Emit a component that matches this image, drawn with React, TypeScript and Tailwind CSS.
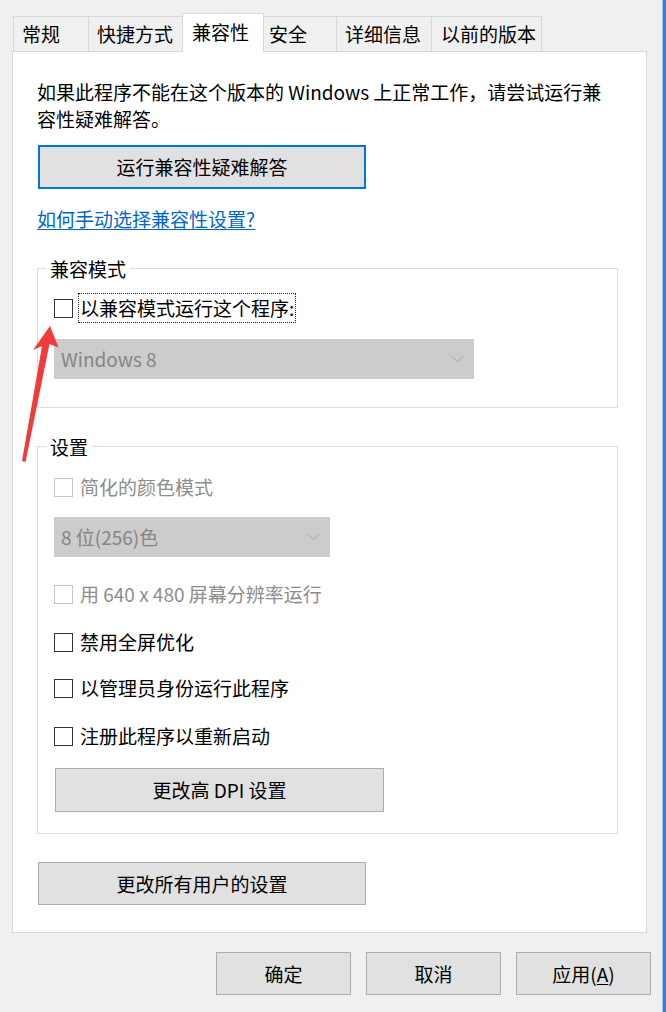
import type { ReactNode } from 'react';

const Check = ({ label, disabled, focused }: { label: string; disabled?: boolean; focused?: boolean }) => (
  <div className="flex h-[30px] items-center">
    <span
      className={`h-[19px] w-[19px] shrink-0 border bg-white ${disabled ? 'border-[#c6c6c6]' : 'border-[#333333]'}`}
    />
    <span
      className={`ml-[5px] flex h-[30px] items-center border border-dotted px-[1px] leading-[28px] ${
        focused ? 'border-[#222222]' : 'border-transparent'
      } ${disabled ? 'text-[#8d8d8d]' : 'text-black'}`}
    >
      {label}
    </span>
  </div>
);

const Select = ({ value, width }: { value: string; width: string }) => (
  <div className={`flex h-[40px] items-center justify-between border border-[#cccccc] bg-[#cccccc] pl-[6px] pr-[9px] ${width}`}>
    <span className="leading-[28px] text-[#858585]">{value}</span>
    <svg width="13" height="8" viewBox="0 0 13 8" fill="none">
      <polyline points="0.5,0.8 6.5,6.8 12.5,0.8" stroke="#a3a3a3" strokeWidth="1" />
    </svg>
  </div>
);

const Button = ({ children, className = '', primary }: { children: ReactNode; className?: string; primary?: boolean }) => (
  <div
    className={`flex items-center justify-center bg-[#e1e1e1] leading-[28px] ${
      primary ? 'border-2 border-[#0078d7]' : 'border border-[#adadad]'
    } ${className}`}
  >
    {children}
  </div>
);

const Group = ({ title, children, className = '' }: { title: string; children: ReactNode; className?: string }) => (
  <fieldset className={`border border-[#dcdcdc] px-[16px] ${className}`}>
    <legend className="ml-[-8px] px-[4px] leading-[27px]">{title}</legend>
    {children}
  </fieldset>
);

const tabs = [
  { name: '常规', w: 'w-[76px]', pl: 'pl-[8px]' },
  { name: '快捷方式', w: 'w-[95px]', pl: 'pl-[8px]' },
  { name: '兼容性', w: 'w-[82px]', pl: 'pl-[9px]', active: true },
  { name: '安全', w: 'w-[74px]', pl: 'pl-[5px]' },
  { name: '详细信息', w: 'w-[96px]', pl: 'pl-[8px]' },
  { name: '以前的版本', w: 'w-[111px]', pl: 'pl-[9px]' },
];

export default function App() {
  return (
    <div className="relative flex h-[1012px] w-[666px] overflow-hidden bg-[#f0f0f0] font-['Noto_Sans_CJK_SC',sans-serif] text-[19px] text-black">
      <div className="flex w-[662px] flex-col pl-[12px] pt-[13px]">
        {/* tab strip */}
        <div className="flex h-[38px] items-end pl-[1px]">
          {tabs.map((t, i) =>
            t.active ? (
              <div
                key={t.name}
                className={`relative z-10 -mb-[1px] -ml-[1px] flex h-[39px] items-center border border-b-0 border-[#d9d9d9] bg-white pb-[3px] leading-[28px] ${t.w} ${t.pl}`}
              >
                {t.name}
              </div>
            ) : (
              <div
                key={t.name}
                className={`flex h-[35px] items-center border border-b-0 border-[#d9d9d9] bg-[#f0f0f0] leading-[28px] ${
                  i > 0 ? '-ml-[1px]' : ''
                } ${t.w} ${t.pl}`}
              >
                {t.name}
              </div>
            )
          )}
        </div>

        {/* page */}
        <div className="flex w-[635px] flex-col border border-[#d9d9d9] bg-white pb-[27px] pl-[24px] pr-[28px] pt-[26px]">
          <p className="leading-[27px]">如果此程序不能在这个版本的 Windows 上正常工作，请尝试运行兼容性疑难解答。</p>

          <Button primary className="ml-[1px] mt-[13px] h-[44px] w-[328px]">
            运行兼容性疑难解答
          </Button>

          <div className="mt-[16px] leading-[27px]">
            <a className="text-[#0066cc] underline underline-offset-2">如何手动选择兼容性设置?</a>
          </div>

          <Group title="兼容模式" className="mt-[23px] pb-[28px]">
            <div className="mt-[11px]">
              <Check label="以兼容模式运行这个程序:" focused />
            </div>
            <div className="mt-[16px]">
              <Select value="Windows 8" width="w-[420px]" />
            </div>
          </Group>

          <Group title="设置" className="mt-[25px] pb-[21px]">
            <div className="mt-[12px]">
              <Check label="简化的颜色模式" disabled />
            </div>
            <div className="mt-[15px]">
              <Select value="8 位(256)色" width="w-[276px]" />
            </div>
            <div className="mt-[22px]">
              <Check label="用 640 x 480 屏幕分辨率运行" disabled />
            </div>
            <div className="mt-[18px]">
              <Check label="禁用全屏优化" />
            </div>
            <div className="mt-[16px]">
              <Check label="以管理员身份运行此程序" />
            </div>
            <div className="mt-[18px]">
              <Check label="注册此程序以重新启动" />
            </div>
            <Button className="ml-[1px] mt-[17px] h-[44px] w-[329px]">更改高 DPI 设置</Button>
          </Group>

          <Button className="ml-[1px] mt-[28px] h-[43px] w-[328px]">更改所有用户的设置</Button>
        </div>

        {/* dialog buttons */}
        <div className="mt-[19px] flex w-[639px] justify-end gap-[15px]">
          <Button className="h-[43px] w-[135px]">确定</Button>
          <Button className="h-[43px] w-[135px]">取消</Button>
          <Button className="h-[43px] w-[135px]">
            <span>
              应用(<span className="underline underline-offset-2">A</span>)
            </span>
          </Button>
        </div>
      </div>

      {/* window edge */}
      <div className="w-[4px] border-l border-[#9cc0ea] bg-[#3a80d2]" />

      {/* red annotation arrow */}
      <svg
        className="pointer-events-none absolute left-[15px] top-[320px]"
        width="50"
        height="150"
        viewBox="15 320 50 150"
      >
        <polygon
          points="50,326 58.5,347.5 49.5,344 25.5,462 22,461 42,346 33,350"
          fill="#f23a3a"
        />
      </svg>
    </div>
  );
}
